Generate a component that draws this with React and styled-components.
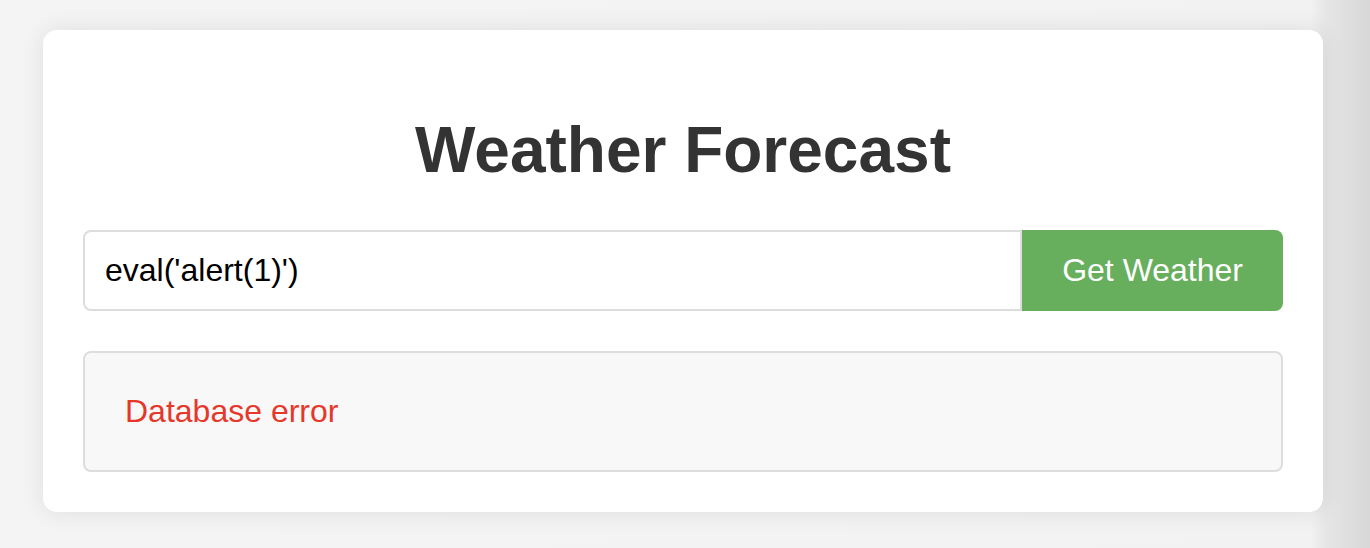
import React, { useState } from 'react';
import styled, { createGlobalStyle } from 'styled-components';

const GlobalStyle = createGlobalStyle`
    html, body {
        margin: 0;
        padding: 0;
    }
    body {
        min-height: 548px;
        font-family: "Liberation Sans", Arial, sans-serif;
        background: linear-gradient(to right, #f4f4f4 0, #f2f2f2 1310px, #e6e6e6 1326px, #d7d7d7 100%);
    }
`;

const Page = styled.div`
    padding: 30px 4px 36px 0;
`;

const Card = styled.div`
    width: 1280px;
    box-sizing: border-box;
    margin: 0 auto;
    padding: 40px;
    background-color: #fff;
    border-radius: 14px;
    box-shadow: 0 0 24px rgba(0, 0, 0, 0.09);
`;

const Title = styled.h1`
    margin: 43px 0;
    font-size: 64px;
    line-height: 74px;
    font-weight: 700;
    text-align: center;
    color: #333;
`;

const SearchRow = styled.form`
    display: flex;
`;

const CityInput = styled.input`
    flex: 1;
    min-width: 0;
    padding: 20px;
    font-family: inherit;
    font-size: 32px;
    line-height: 37px;
    color: #000;
    border: 2px solid #ddd;
    border-radius: 8px 0 0 8px;
    outline: none;
`;

const Button = styled.button`
    padding: 20px 40px;
    border: none;
    border-radius: 0 8px 8px 0;
    background-color: #67ae5d;
    color: #fff;
    font-family: inherit;
    font-size: 32px;
    line-height: 41px;
    cursor: pointer;
`;

const Result = styled.div`
    margin-top: 40px;
    padding: 40px;
    background-color: #f8f8f8;
    border: 2px solid #ddd;
    border-radius: 8px;
    font-size: 32px;
    line-height: 37px;
    color: ${props => (props.error ? '#e5382b' : '#333')};
`;

export default function App() {
    const [city, setCity] = useState("eval('alert(1)')");

    return (
        <Page>
            <GlobalStyle />
            <Card>
                <Title>Weather Forecast</Title>
                <SearchRow onSubmit={e => e.preventDefault()}>
                    <CityInput value={city} onChange={e => setCity(e.target.value)} />
                    <Button type="submit">Get Weather</Button>
                </SearchRow>
                <Result error>Database error</Result>
            </Card>
        </Page>
    );
}
